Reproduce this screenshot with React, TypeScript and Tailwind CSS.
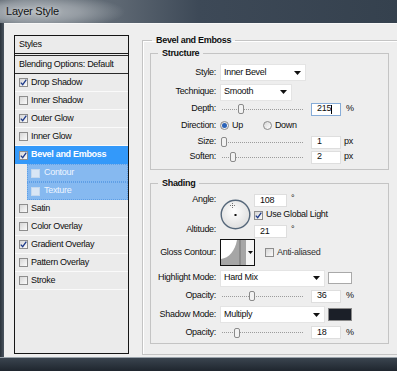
import React from "react";

const items = [
  { label: "Drop Shadow", checked: true },
  { label: "Inner Shadow", checked: false },
  { label: "Outer Glow", checked: true },
  { label: "Inner Glow", checked: false },
  { label: "Bevel and Emboss", checked: true, selected: true },
  { label: "Contour", checked: false, sub: true },
  { label: "Texture", checked: false, sub: true },
  { label: "Satin", checked: false },
  { label: "Color Overlay", checked: false },
  { label: "Gradient Overlay", checked: true },
  { label: "Pattern Overlay", checked: false },
  { label: "Stroke", checked: false },
];

const Check = ({ checked = false, dim = false }: { checked?: boolean; dim?: boolean }) => (
  <span
    className={`flex h-[9px] w-[9px] shrink-0 items-center justify-center border ${
      dim ? "border-[#c4d8ee] bg-[#d9e6f5]" : "border-[#8d8d8d] bg-[linear-gradient(135deg,#d6d6d6,#fbfbfb)]"
    }`}
  >
    {checked && (
      <svg width="7" height="7" viewBox="0 0 7 7">
        <path d="M0.8 3.6 2.7 5.7 6.3 0.6" fill="none" stroke="#1d3a8a" strokeWidth="1.3" />
      </svg>
    )}
  </span>
);

const Radio = ({ on = false }: { on?: boolean }) => (
  <span className="flex h-[9px] w-[9px] items-center justify-center rounded-full border border-[#8a8a8a] bg-[linear-gradient(135deg,#d8d8d8,#ffffff)]">
    {on && <span className="h-[5px] w-[5px] rounded-full bg-[#2a62b8]" />}
  </span>
);

const Slider = ({ at }: { at: number }) => (
  <div className="relative flex h-[12px] w-[85px] shrink-0 items-center">
    <div className="ml-[2px] w-[81px] border-t border-dotted border-[#9c9c9c]" />
    <svg className="absolute top-0" style={{ left: at - 4 }} width="8" height="12" viewBox="0 0 8 12">
      <path d="M1.5 3 Q1.5 1.5 3 1.5 L5 1.5 Q6.5 1.5 6.5 3 L6.5 9 Q6.5 10.5 5 10.5 L3 10.5 Q1.5 10.5 1.5 9 Z" fill="#f2f2f2" stroke="#8a8a8a" />
    </svg>
  </div>
);

const Field = ({ value, w = "w-[30px]", focus = false }: { value: string; w?: string; focus?: boolean }) => (
  <div
    className={`flex h-[13px] ${w} shrink-0 items-center border bg-white pl-[5px] ${
      focus ? "border-[#86acd8]" : "border-[#dedede]"
    }`}
  >
    {value}
    {focus && <span className="h-[9px] w-px bg-black" />}
  </div>
);

const Select = ({ value, w }: { value: string; w: string }) => (
  <div className={`flex h-[17px] ${w} shrink-0 items-center justify-between border border-[#e4e4e4] bg-white pl-[3px] pr-[4px]`}>
    <span>{value}</span>
    <svg width="7" height="4" viewBox="0 0 7 4">
      <path d="M0 0H7L3.5 4Z" fill="#111" />
    </svg>
  </div>
);

const Row = ({ label, h, children }: { label: string; h: string; children: React.ReactNode }) => (
  <div className={`flex ${h} items-center`}>
    <div className="w-[65px] shrink-0 text-right">{label}</div>
    <div className="ml-[4px] flex items-center">{children}</div>
  </div>
);

export default function App() {
  return (
    <div className="flex h-[371px] w-[397px] flex-col overflow-hidden bg-[#27303a] font-['Liberation_Sans',Arial,sans-serif] text-[9px] tracking-[-0.3px] text-[#0e0e0e]">
      {/* title bar */}
      <div className="flex h-[23px] shrink-0 items-center bg-[radial-gradient(ellipse_90px_18px_at_35px_12px,#b3b8bd_0%,#959ca3_50%,transparent_100%),linear-gradient(to_right,#4a545e_0%,#6f7880_6%,#5d6772_30%,#3d4957_50%,#35414e_100%)] pl-[6px]">
        <span className="text-[11px] tracking-[-0.2px] text-[#141414] [text-shadow:0_0_4px_#d8dcdf]">Layer Style</span>
      </div>

      <div className="flex min-h-0 flex-1">
        <div className="w-[4px] shrink-0 bg-[linear-gradient(to_right,#2a323b,#4b5560)]" />
        <div className="flex flex-1 items-start border-t border-[#f7f7f7] bg-[#eeeeee] pl-[10px]">
          {/* styles list */}
          <div className="mt-[11px] flex h-[319px] w-[115px] shrink-0 flex-col border border-[#151515] bg-[#ebebeb]">
            <div className="flex h-[18px] shrink-0 items-center border-b border-[#1a1a1a] pl-[4px]">Styles</div>
            <div className="h-[1px] shrink-0" />
            <div className="flex h-[19px] shrink-0 items-center border-y border-[#2a2a2a] pl-[4px]">Blending Options: Default</div>
            {items.map((it) =>
              it.sub ? (
                <div key={it.label} className="flex h-[18px] shrink-0 bg-[#ebebeb]">
                  <div className="ml-[12px] flex flex-1 items-center gap-[4px] border border-dotted border-[#5f9fe6] bg-[#86b9f0] pl-[3px] text-[#eef5ff]">
                    <Check dim />
                    <span>{it.label}</span>
                  </div>
                </div>
              ) : (
                <div
                  key={it.label}
                  className={`flex h-[18px] shrink-0 items-center gap-[3px] pl-[4px] ${
                    it.selected ? "bg-[#3399fa] font-bold text-white" : "border-b border-[#fafafa]"
                  }`}
                >
                  <Check checked={it.checked} />
                  <span>{it.label}</span>
                </div>
              )
            )}
          </div>

          {/* Bevel and Emboss */}
          <fieldset className="ml-[13px] mt-[10px] w-[260px] shrink-0 border border-[#c4c4c4] pb-[10px] shadow-[inset_1px_1px_0_#ffffff]">
            <legend className="ml-[9px] px-[4px] font-bold leading-[12px]">Bevel and Emboss</legend>

            <fieldset className="ml-[7px] mt-px w-[239px] border border-[#c4c4c4] pb-[4px] pt-[4px]">
              <legend className="ml-[7px] px-[4px] font-bold leading-[12px]">Structure</legend>
              <Row label="Style:" h="h-[19px]">
                <Select value="Inner Bevel" w="w-[86px]" />
              </Row>
              <Row label="Technique:" h="h-[20px]">
                <Select value="Smooth" w="w-[72px]" />
              </Row>
              <Row label="Depth:" h="h-[14px]">
                <Slider at={21} />
                <div className="ml-[6px]">
                  <Field value="215" focus />
                </div>
                <span className="ml-[5px]">%</span>
              </Row>
              <Row label="Direction:" h="h-[19px]">
                <div className="flex items-center">
                  <Radio on />
                  <span className="ml-[3px]">Up</span>
                  <div className="ml-[20px]">
                    <Radio />
                  </div>
                  <span className="ml-[3px]">Down</span>
                </div>
              </Row>
              <Row label="Size:" h="h-[14px]">
                <Slider at={4} />
                <div className="ml-[6px]">
                  <Field value="1" />
                </div>
                <span className="ml-[3px]">px</span>
              </Row>
              <Row label="Soften:" h="h-[16px]">
                <Slider at={13} />
                <div className="ml-[6px]">
                  <Field value="2" />
                </div>
                <span className="ml-[3px]">px</span>
              </Row>
            </fieldset>

            <fieldset className="ml-[7px] mt-[7px] w-[239px] border border-[#c4c4c4] pb-[4px] pt-[3px]">
              <legend className="ml-[7px] px-[4px] font-bold leading-[12px]">Shading</legend>

              <div className="flex h-[46px]">
                <div className="flex w-[65px] shrink-0 flex-col items-end gap-[18px] pt-px">
                  <span className="leading-[12px]">Angle:</span>
                  <span className="leading-[12px]">Altitude:</span>
                </div>
                <div className="ml-[4px] mt-[7px]">
                  <svg width="31" height="31" viewBox="0 0 31 31">
                    <defs>
                      <radialGradient id="dial" cx="45%" cy="40%" r="60%">
                        <stop offset="0%" stopColor="#ffffff" />
                        <stop offset="100%" stopColor="#dedede" />
                      </radialGradient>
                    </defs>
                    <circle cx="15.5" cy="15.5" r="14.3" fill="url(#dial)" stroke="#55677a" strokeWidth="1.4" />
                    <rect x="14.5" y="15" width="2" height="2" fill="#111" />
                    <path d="M12.5 4v5M10 6.5h5" stroke="#555" strokeWidth="0.8" strokeDasharray="1 1" />
                  </svg>
                </div>
                <div className="ml-[3px] mt-[2px] flex flex-col">
                  <div className="flex items-start">
                    <Field value="108" w="w-[33px]" />
                    <span className="ml-[4px] leading-[8px]">°</span>
                  </div>
                  <div className="mt-[2px] flex h-[12px] items-center gap-[3px]">
                    <Check checked />
                    <span>Use Global Light</span>
                  </div>
                  <div className="mt-[4px] flex items-start">
                    <Field value="21" w="w-[33px]" />
                    <span className="ml-[4px] leading-[8px]">°</span>
                  </div>
                </div>
              </div>

              <Row label="Gloss Contour:" h="h-[29px]">
                <div className="flex h-[27px] w-[35px] border border-[#111] bg-[#f4f4f4]">
                  <svg width="25" height="25" viewBox="0 0 25 25" className="bg-white">
                    <path d="M0 25V19C8 18 14 11 16 0H25V25Z" fill="#a6a6a6" />
                    <path d="M19 0V25" stroke="#8c8c8c" strokeWidth="2" />
                  </svg>
                  <div className="flex flex-1 items-center justify-center">
                    <svg width="5" height="3" viewBox="0 0 5 3">
                      <path d="M0 0H5L2.5 3Z" fill="#111" />
                    </svg>
                  </div>
                </div>
                <div className="ml-[10px] flex items-center gap-[3px] text-[#333]">
                  <Check />
                  <span>Anti-aliased</span>
                </div>
              </Row>
              <Row label="Highlight Mode:" h="h-[22px]">
                <Select value="Hard Mix" w="w-[105px]" />
                <div className="ml-[3px] h-[12px] w-[24px] border border-[#a9a9a9] bg-white" />
              </Row>
              <Row label="Opacity:" h="h-[14px]">
                <Slider at={32} />
                <div className="ml-[6px]">
                  <Field value="36" />
                </div>
                <span className="ml-[5px]">%</span>
              </Row>
              <Row label="Shadow Mode:" h="h-[23px]">
                <Select value="Multiply" w="w-[105px]" />
                <div className="ml-[3px] h-[13px] w-[24px] border border-[#8a8a8a] bg-[#1b1f28]" />
              </Row>
              <Row label="Opacity:" h="h-[13px]">
                <Slider at={17} />
                <div className="ml-[6px]">
                  <Field value="18" />
                </div>
                <span className="ml-[5px]">%</span>
              </Row>
            </fieldset>
          </fieldset>
        </div>
      </div>

      {/* bottom frame */}
      <div className="h-[14px] shrink-0 border-t border-[#9aa3ab] bg-[linear-gradient(to_bottom,#3a444f,#1f262e)]" />
    </div>
  );
}
